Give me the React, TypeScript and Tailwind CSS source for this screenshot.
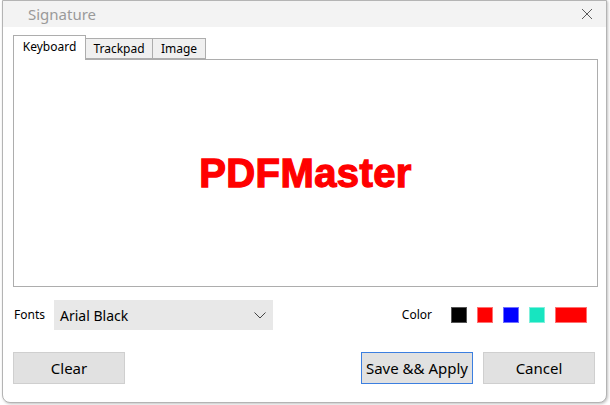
import React from "react";

export default function App() {
  const ui = { fontFamily: '"Noto Sans", "Open Sans", sans-serif' };
  return (
    <div className="w-[610px] h-[405px] bg-white relative overflow-hidden" style={ui}>
      <div className="absolute left-[2px] top-0 w-[605px] h-[403px] border border-[#b4b4b4] rounded-b-[8px] bg-white flex flex-col shadow-[1px_1px_3px_rgba(0,0,0,0.25)] overflow-hidden">
        <div className="h-[26px] bg-[#f3f3f3] flex items-center justify-between pl-[25px] pr-[12px] shrink-0">
          <span className="text-[15px] text-[#9a9a9a] leading-none">Signature</span>
          <svg width="12" height="12" viewBox="0 0 12 12" className="mr-[1px]">
            <path d="M1 1 L11 11 M11 1 L1 11" stroke="#5a5a5a" strokeWidth="1" />
          </svg>
        </div>
        <div className="flex flex-col px-[10px] pt-[7px]">
          <div className="flex items-end h-[25px]">
            <div className="h-[25px] w-[73px] border border-b-0 border-[#adadad] bg-white flex items-center justify-center text-[12px] text-black relative z-10 -mb-px pb-[2px]">Keyboard</div>
            <div className="h-[21px] w-[67px] border border-l-0 border-[#adadad] bg-[#f0f0f0] flex items-center justify-center text-[12px] text-black">Trackpad</div>
            <div className="h-[21px] w-[53px] border border-l-0 border-[#adadad] bg-[#f0f0f0] flex items-center justify-center text-[12px] text-black">Image</div>
          </div>
          <div className="h-[228px] w-[585px] border border-[#adadad] bg-white flex items-center justify-center">
            <span
              className="text-[40px] text-[#ff0000] font-black leading-none tracking-[0.4px]"
              style={{ fontFamily: '"Liberation Sans", Arial, sans-serif', WebkitTextStroke: "1.3px #ff0000" }}
            >
              PDFMaster
            </span>
          </div>
          <div className="flex items-center mt-[13px] h-[30px]">
            <span className="text-[12px] text-black w-[41px] pl-px">Fonts</span>
            <div className="w-[219px] h-[30px] bg-[#e8e8e8] flex items-center justify-between pl-[6px] pr-[7px]">
              <span className="text-[14px] text-black">Arial Black</span>
              <svg width="12" height="7" viewBox="0 0 12 7">
                <path d="M0.5 0.5 L6 6 L11.5 0.5" stroke="#444" strokeWidth="1" fill="none" />
              </svg>
            </div>
            <div className="flex-1" />
            <span className="text-[12px] text-black mr-[19px]">Color</span>
            <div className="flex items-center gap-[10px] mr-[9px]">
              <div className="w-[16px] h-[16px] bg-black border border-[#555]" />
              <div className="w-[16px] h-[16px] bg-[#ff0000] border border-[#ff7070]" />
              <div className="w-[16px] h-[16px] bg-[#0000ff] border border-[#7070ff]" />
              <div className="w-[16px] h-[16px] bg-[#17e5c0] border border-[#80f0dc]" />
              <div className="w-[32px] h-[16px] bg-[#ff0000] border border-[#ff7070]" />
            </div>
          </div>
          <div className="flex items-center mt-[22px]">
            <button className="w-[112px] h-[32px] bg-[#e1e1e1] border border-[#cfcfcf] text-[15px] text-black">Clear</button>
            <div className="flex-1" />
            <button className="w-[112px] h-[32px] bg-[#e1e1e1] border border-[#3c7fe0] text-[15px] text-black">Save &amp;&amp; Apply</button>
            <button className="w-[112px] h-[32px] bg-[#e1e1e1] border border-[#cfcfcf] text-[15px] text-black ml-[10px] mr-[1px]">Cancel</button>
          </div>
        </div>
      </div>
    </div>
  );
}
